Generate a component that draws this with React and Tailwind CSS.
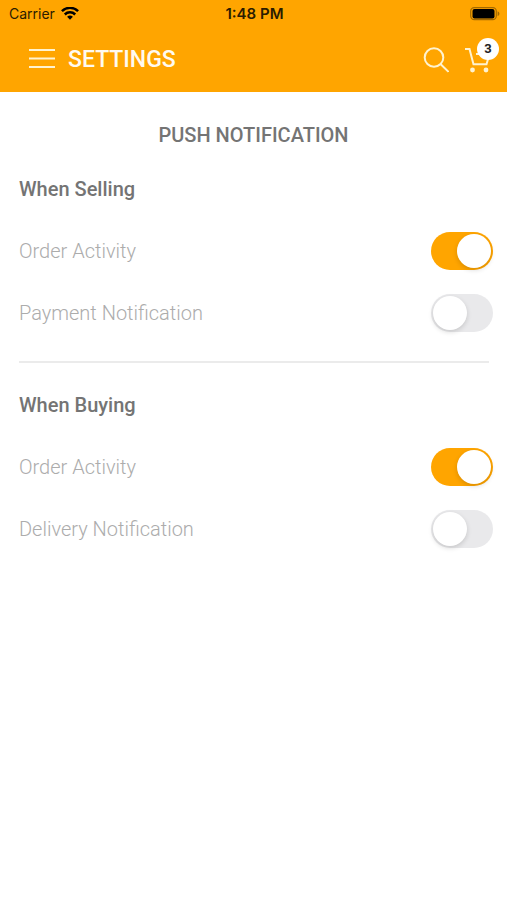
import React, { useState } from 'react';

const sections = [
    {
        title: "When Selling",
        items: [
            { id: "selling-order", label: "Order Activity" },
            { id: "selling-payment", label: "Payment Notification" },
        ],
    },
    {
        title: "When Buying",
        items: [
            { id: "buying-order", label: "Order Activity" },
            { id: "buying-delivery", label: "Delivery Notification" },
        ],
    },
];

const StatusBar = () => (
    <div className="grid h-7 grid-cols-3 items-center pl-[9px] pr-[7px] font-[Inter,sans-serif] text-sm text-[#2b1c00]">
        <div className="flex items-center gap-1.5">
            <span>Carrier</span>
            <svg width="18" height="14" viewBox="0 0 18 14" fill="none" stroke="#000" strokeWidth="2.5" aria-hidden="true">
                <path d="M0.9 4.2a11.5 11.5 0 0 1 16.2 0" />
                <path d="M3.8 7.5a7.4 7.4 0 0 1 10.4 0" />
                <path d="M9 12.8l-2.9-3a4.2 4.2 0 0 1 5.8 0z" fill="#000" stroke="none" />
            </svg>
        </div>
        <span className="text-center text-[15px] font-semibold">1:48 PM</span>
        <svg className="justify-self-end" width="30" height="14" viewBox="0 1 30 14" aria-hidden="true">
            <rect x="0.7" y="1.7" width="25.6" height="12" rx="3.6" fill="none" stroke="#a36a00" strokeWidth="1.2" />
            <rect x="2.5" y="3" width="22" height="9.400" rx="2" fill="#000" />
            <path d="M27.6 5.2c2.400 .8 2.400 4 0 4.8z" fill="#a36a00" />
        </svg>
    </div>
);

const Header = () => (
    <header className="bg-[#ffa500]">
        <StatusBar />
        <div className="flex h-16 items-center pr-2 pl-7">
            <button type="button" aria-label="Menu">
                <svg width="28" height="22" viewBox="0 0 28 22" stroke="#fff3d0" strokeWidth="2" aria-hidden="true">
                    <path d="M1 1h26M1 9.500h26M1 18h26" />
                </svg>
            </button>
            <h1 className="ml-3 text-[23px] leading-7 font-medium text-[#fffaf0]">SETTINGS</h1>
            <button type="button" aria-label="Search" className="ml-auto">
                <svg width="26" height="26" viewBox="0 1 26 26" fill="none" stroke="#fff3d0" strokeWidth="2" aria-hidden="true">
                    <circle cx="11" cy="11.500" r="9.300" />
                    <path d="M17.500 18l8 7.800" />
                </svg>
            </button>
            <button type="button" aria-label="Cart" className="relative ml-4 w-[34px]">
                <svg width="26" height="28" viewBox="0 1 26 28" fill="none" stroke="#fff3d0" strokeWidth="2" aria-hidden="true">
                    <path d="M0 4h4.500l4 15.300h13L24.500 9H11" />
                    <circle cx="7.500" cy="25" r="2.400" fill="#fff3d0" stroke="none" />
                    <circle cx="21" cy="25" r="2.400" fill="#fff3d0" stroke="none" />
                </svg>
                <span className="absolute -top-2 right-0 flex size-[22px] items-center justify-center rounded-full bg-white text-[13px] font-bold text-[#222222]">3</span>
            </button>
        </div>
    </header>
);

const Toggle = ({ id, checked, onChange }) => (
    <input
        id={id}
        type="checkbox"
        role="switch"
        checked={checked}
        onChange={onChange}
        className="flex h-[38px] w-[62px] shrink-0 cursor-pointer appearance-none items-center rounded-full bg-[#e9e9eb] p-0.5 before:size-[34px] before:rounded-full before:bg-white before:shadow-[0_2px_5px_rgba(0,0,0,0.15)] checked:justify-end checked:bg-[#ffa500]"
    />
);

export default function App() {
    const [enabled, setEnabled] = useState({
        "selling-order": true,
        "selling-payment": false,
        "buying-order": true,
        "buying-delivery": false,
    });

    const toggle = (id) => {
        setEnabled((prev) => ({ ...prev, [id]: !prev[id] }));
    };

    return (
        <div className="min-h-screen bg-white font-[Roboto,sans-serif]">
            <Header />
            <main className="pt-[29px]">
                <h2 className="mb-[9px] text-center text-xl leading-7 font-medium text-[#747474]">PUSH NOTIFICATION</h2>
                {sections.map((section, index) => (
                    <section key={section.title} className="pt-[17px] pr-3.5 pl-[19px]">
                        {index > 0 && <hr className="mr-1 mb-7 border-t-2 border-[#ebebeb]" />}
                        <h3 className="mb-[17px] text-xl leading-7 font-medium text-[#747474]">{section.title}</h3>
                        {section.items.map((item) => (
                            <div key={item.id} className="flex h-[62px] items-center justify-between">
                                <label htmlFor={item.id} className="text-xl leading-7 font-light text-[#acacac]">{item.label}</label>
                                <Toggle id={item.id} checked={enabled[item.id]} onChange={() => toggle(item.id)} />
                            </div>
                        ))}
                    </section>
                ))}
            </main>
        </div>
    );
}
